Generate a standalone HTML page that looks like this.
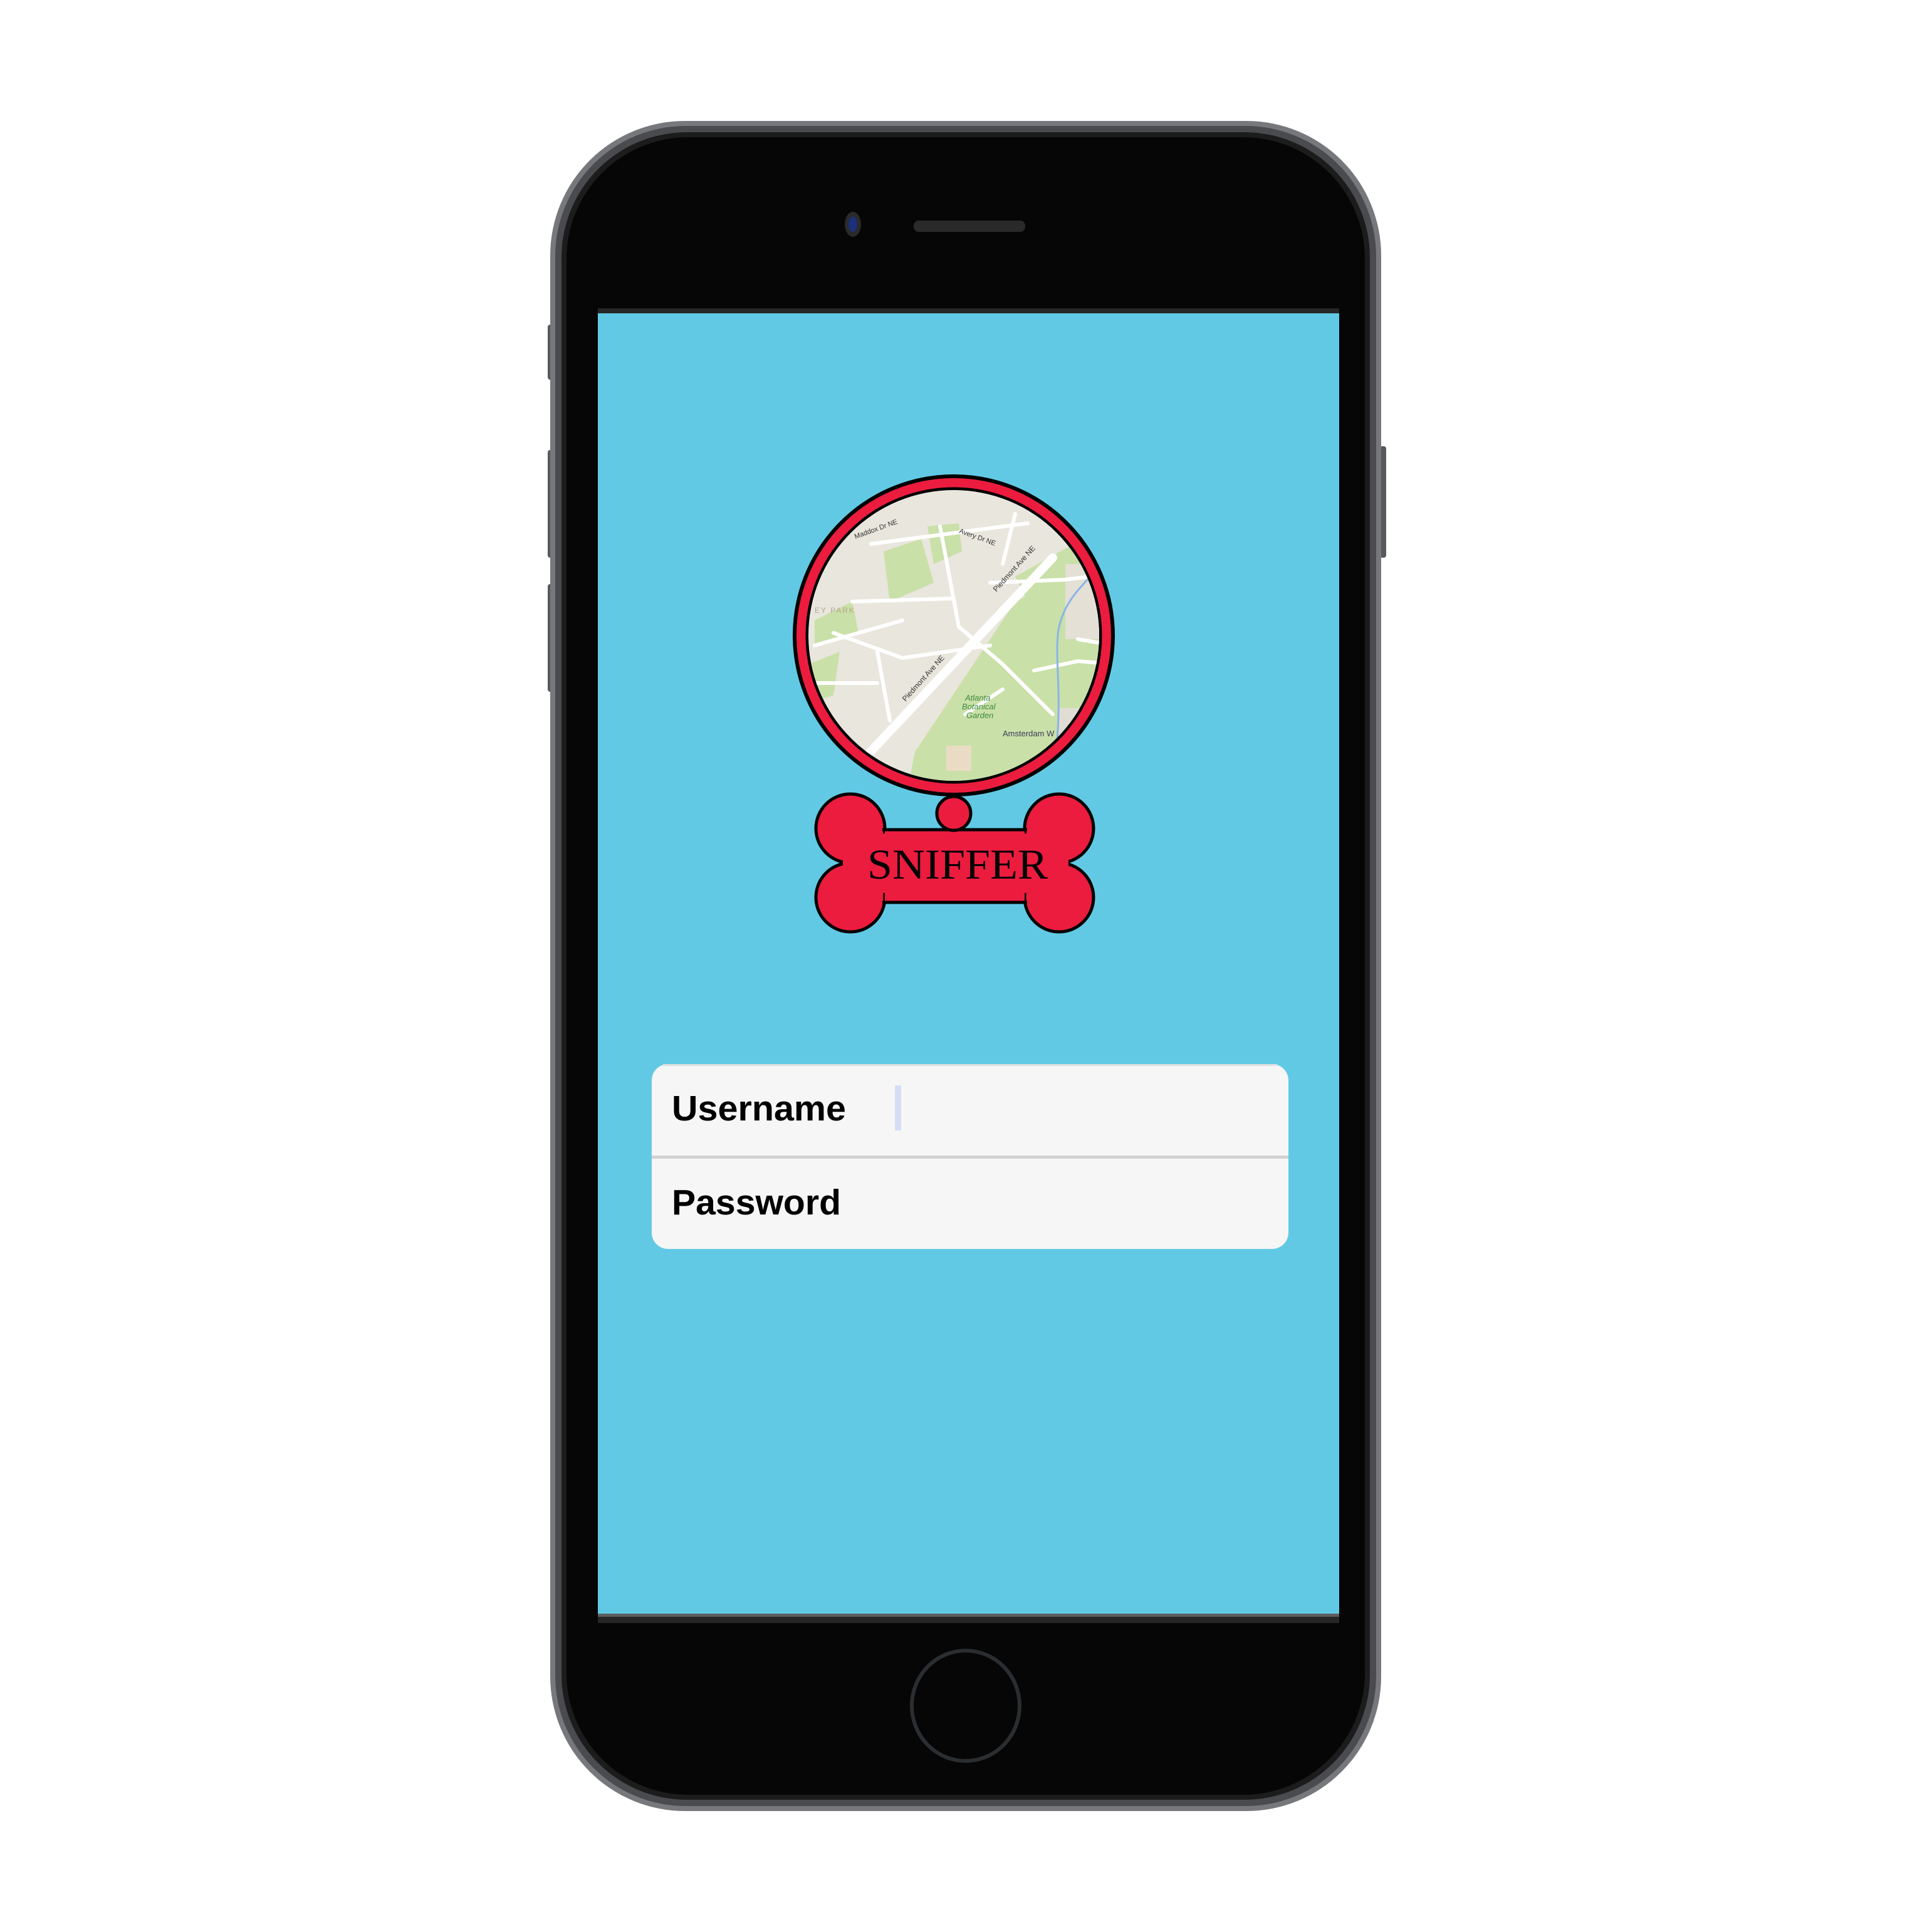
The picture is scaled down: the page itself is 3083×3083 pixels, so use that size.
<!DOCTYPE html>
<html><head><meta charset="utf-8"><style>
html,body{margin:0;padding:0;background:#fff;}
svg{display:block}
</style></head><body>
<svg width="3083" height="3083" viewBox="0 0 3083 3083" xmlns="http://www.w3.org/2000/svg">
<defs>
<clipPath id="mc"><circle cx="1522" cy="1014" r="232"/></clipPath>
</defs>
<rect width="3083" height="3083" fill="#fff"/>
<!-- side buttons -->
<rect x="874" y="518" width="10" height="88" rx="4" fill="#58595c"/>
<rect x="874" y="718" width="10" height="172" rx="4" fill="#58595c"/>
<rect x="874" y="932" width="10" height="172" rx="4" fill="#58595c"/>
<rect x="2202" y="712" width="10" height="178" rx="4" fill="#58595c"/>
<!-- phone body -->
<rect x="878" y="193" width="1326" height="2697" rx="215" fill="#77787c"/>
<rect x="886" y="201" width="1310" height="2681" rx="208" fill="#4a4b4e"/>
<rect x="896" y="211" width="1290" height="2661" rx="200" fill="#1c1c1d"/>
<rect x="904" y="219" width="1274" height="2645" rx="194" fill="#060606"/>
<!-- camera & speaker -->
<ellipse cx="1361" cy="358" rx="13" ry="20" fill="#2a2a2c"/>
<ellipse cx="1361" cy="358" rx="7" ry="12" fill="#1b2f7a"/>
<rect x="1458" y="352" width="178" height="18" rx="8" fill="#2a2a2a"/>
<!-- screen -->
<rect x="954" y="492" width="1183" height="2098" fill="#262626"/>
<rect x="954" y="500" width="1183" height="2075" fill="#62c9e5"/>
<rect x="954" y="2575" width="1183" height="5" fill="#5d5d5d"/>
<!-- home button -->
<ellipse cx="1541" cy="2722" rx="86" ry="88" fill="none" stroke="#2b2e31" stroke-width="6"/>

<!-- map logo -->
<circle cx="1522" cy="1014" r="254" fill="#ec1c3f" stroke="#000" stroke-width="6"/>
<circle cx="1522" cy="1014" r="233" fill="#e9e6dd" stroke="#000" stroke-width="7"/>
<g clip-path="url(#mc)">
<rect x="1280" y="770" width="500" height="500" fill="#e9e6dd"/>
<path d="M1540 1080 L1620 960 L1800 870 L1800 1300 L1440 1300 L1460 1200 Z" fill="#c9e0a8"/>
<path d="M1620 920 L1800 820 L1800 1000 L1680 1040 Z" fill="#c9e0a8"/>
<path d="M1410 880 L1470 860 L1490 930 L1420 960 Z" fill="#c9e0a8"/>
<path d="M1480 840 L1530 835 L1535 880 L1490 900 Z" fill="#c9e0a8"/>
<path d="M1290 1060 L1340 1040 L1330 1110 L1290 1120 Z" fill="#c9e0a8"/>
<path d="M1300 990 L1360 960 L1370 1010 L1300 1030 Z" fill="#c9e0a8"/>
<rect x="1700" y="900" width="80" height="120" fill="#e4e0d6"/>
<rect x="1690" y="1130" width="90" height="120" fill="#e1ddd4"/>
<rect x="1510" y="1190" width="40" height="40" fill="#eadcc4"/>
<g fill="none" stroke="#fff" stroke-linecap="round">
<path d="M1370 1220 L1680 890" stroke-width="14"/>
<path d="M1390 868 L1640 835 M1500 840 L1530 1000 L1600 1060 L1680 1140 M1360 960 L1520 955 M1330 1010 L1440 1050 L1580 1030 M1400 1040 L1420 1150 M1580 930 L1700 925 L1740 920 M1600 900 L1620 820 M1700 860 L1720 800 M1440 990 L1300 1030 M1600 1100 L1540 1140 M1650 1070 L1720 1055 L1780 1060 M1720 1020 L1780 1030 M1300 1090 L1400 1090" stroke-width="6"/>
</g>
<path d="M1760 900 C1720 940 1700 960 1690 1000 C1680 1050 1700 1120 1680 1230" fill="none" stroke="#8ab4e8" stroke-width="3"/>
<text x="1540" y="1118" font-family="Liberation Sans, sans-serif" font-size="13" font-style="italic" fill="#3d8a3d">Atlanta</text>
<text x="1535" y="1132" font-family="Liberation Sans, sans-serif" font-size="13" font-style="italic" fill="#3d8a3d">Botanical</text>
<text x="1542" y="1146" font-family="Liberation Sans, sans-serif" font-size="13" font-style="italic" fill="#3d8a3d">Garden</text>
<text x="1600" y="1175" font-family="Liberation Sans, sans-serif" font-size="13" fill="#3a3a5a">Amsterdam W</text>
<text x="1365" y="860" font-family="Liberation Sans, sans-serif" font-size="11" fill="#333" transform="rotate(-20 1365 860)">Maddox Dr NE</text>
<text x="1530" y="850" font-family="Liberation Sans, sans-serif" font-size="11" fill="#333" transform="rotate(20 1530 850)">Avery Dr NE</text>
<text x="1590" y="945" font-family="Liberation Sans, sans-serif" font-size="12" fill="#333" transform="rotate(-48 1590 945)">Piedmont Ave NE</text>
<text x="1445" y="1120" font-family="Liberation Sans, sans-serif" font-size="12" fill="#333" transform="rotate(-48 1445 1120)">Piedmont Ave NE</text>
<text x="1300" y="978" font-family="Liberation Sans, sans-serif" font-size="12" fill="#b8a68a" letter-spacing="2">EY PARK</text>
</g>
<!-- bone -->
<g fill="#ec1c3f" stroke="#000" stroke-width="5">
<circle cx="1357" cy="1322" r="55"/>
<circle cx="1357" cy="1432" r="55"/>
<circle cx="1690" cy="1322" r="55"/>
<circle cx="1690" cy="1432" r="55"/>
</g>
<rect x="1412" y="1324" width="223" height="116" fill="#ec1c3f"/>
<line x1="1408" y1="1324" x2="1639" y2="1324" stroke="#000" stroke-width="5"/>
<line x1="1408" y1="1440" x2="1639" y2="1440" stroke="#000" stroke-width="5"/>
<rect x="1345" y="1330" width="360" height="95" fill="#ec1c3f"/>
<circle cx="1522" cy="1298" r="27" fill="#ec1c3f" stroke="#000" stroke-width="5"/>
<text x="1528" y="1402" text-anchor="middle" font-family="Liberation Serif, serif" font-size="68" fill="#000" textLength="288" lengthAdjust="spacingAndGlyphs">SNIFFER</text>
<!-- form -->
<rect x="1040" y="1698" width="1016" height="295" rx="26" fill="#f6f6f6"/>
<rect x="1058" y="1698" width="980" height="3" fill="#dedede"/>
<rect x="1040" y="1844" width="1016" height="5" fill="#d2d2d2"/>
<rect x="1428" y="1732" width="10" height="72" fill="#d6def7"/>
<text x="1072" y="1788" font-family="Liberation Sans, sans-serif" font-weight="bold" font-size="57" fill="#000" textLength="278" lengthAdjust="spacingAndGlyphs">Username</text>
<text x="1072" y="1938" font-family="Liberation Sans, sans-serif" font-weight="bold" font-size="57" fill="#000" textLength="270" lengthAdjust="spacingAndGlyphs">Password</text>
</svg>
</body></html>
